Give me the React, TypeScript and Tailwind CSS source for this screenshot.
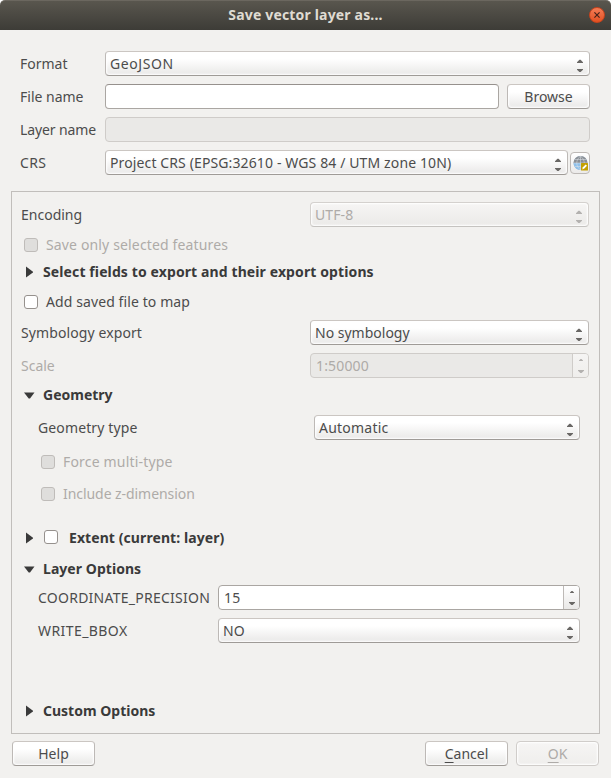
import type { ReactNode } from 'react';
import clsx from 'clsx';

function Arrows({ className }: { className?: string }) {
  return (
    <svg viewBox="0 0 6 13" className={clsx('h-[13px] w-[6px] shrink-0', className)} fill="currentColor">
      <path d="M0 4v-.8L2.4.8h1.2L6 3.2V4zM0 10v.8l2.4 2.2h1.2L6 10.8V10z" />
    </svg>
  );
}

function Select({ value, disabled, className }: { value: string; disabled?: boolean; className?: string }) {
  return (
    <div
      className={clsx(
        'flex h-[25px] items-center justify-between rounded-[4px] border pr-[6px] pl-1 shadow-[inset_0_0_2px_1px_#fff]',
        disabled
          ? 'border-[#d4d1ce] border-b-[#c5c3c0] bg-linear-to-b from-[#f6f5f4] to-[#ebeae8] text-[#aeaba8]'
          : 'border-[#bdb9b6] border-t-[#cbc6c2] border-b-[#9f9b97] bg-linear-to-b from-white from-30% to-[#e9e8e7] text-[#4c4c4c]',
        className,
      )}
    >
      <span>{value}</span>
      <Arrows className={clsx('mt-1', disabled ? 'text-[#b3b1af]' : 'text-[#696765]')} />
    </div>
  );
}

function SpinBox({ value, disabled, className }: { value: string; disabled?: boolean; className?: string }) {
  return (
    <div
      className={clsx(
        'flex h-[25px] items-stretch overflow-hidden rounded-[4px] border',
        disabled ? 'border-[#cfccc9] bg-[#eae9e7] text-[#aeaba8]' : 'border-[#aaa6a2] bg-white text-[#4c4c4c]',
        className,
      )}
    >
      <span className="flex flex-1 items-center pl-[5px]">{value}</span>
      <span
        className={clsx(
          'flex w-[16px] justify-center border-l bg-linear-to-b',
          disabled ? 'border-[#cfccc9] from-[#f5f4f3] to-[#efeeec]' : 'border-[#bdb9b6] from-white to-[#e9e8e7]',
        )}
      >
        <svg
          viewBox="0 0 6 15"
          className={clsx('mt-[5px] h-[15px] w-[6px]', disabled ? 'text-[#b3b1af]' : 'text-[#696765]')}
          fill="currentColor"
        >
          <path d="M1 2v-.5L2.5 0h1L5 1.500V2zM0 11v.8L2.400 14h1.200L6 11.800V11z" />
        </svg>
      </span>
    </div>
  );
}

function Button({ children, disabled }: { children: ReactNode; disabled?: boolean }) {
  return (
    <button
      disabled={disabled}
      className={clsx(
        'h-[25px] w-[83px] shrink-0 rounded-[4px] border text-center shadow-[inset_0_0_2px_1px_#fff]',
        disabled
          ? 'border-[#d0cdca] bg-linear-to-b from-[#f6f5f4] to-[#efeeec] text-[#aeaba8]'
          : 'border-[#bdb9b6] border-t-[#cbc6c2] border-b-[#9f9b97] bg-linear-to-b from-white from-30% to-[#e9e8e7] text-[#4c4c4c]',
      )}
    >
      {children}
    </button>
  );
}

function CheckBox({ disabled }: { disabled?: boolean }) {
  return (
    <span
      className={clsx(
        'size-[14px] shrink-0 rounded-[3px] border',
        disabled ? 'border-[#bfbcb9] bg-[#dfdedc]' : 'border-[#96918d] bg-white',
      )}
    />
  );
}

function Triangle({ open }: { open?: boolean }) {
  return (
    <svg viewBox="0 0 11 12" className="h-[12px] w-[11px] shrink-0" fill="#3a3a3a">
      {open ? <path d="M0 3.500h10.500L6 9.500H4.700z" /> : <path d="M2 .5 9 5.800v.8L2 11.500z" />}
    </svg>
  );
}

function Section({ title, open, check, className }: { title: ReactNode; open?: boolean; check?: boolean; className?: string }) {
  return (
    <div className={clsx('flex h-5 items-center pl-[12px] font-bold text-[#3a3a3a]', className)}>
      <Triangle open={open} />
      {check && (
        <span className="mr-[11px] -mt-[2px] ml-[9px] flex">
          <CheckBox />
        </span>
      )}
      <span className={check ? '' : 'ml-2'}>{title}</span>
    </div>
  );
}

function GlobeIcon() {
  return (
    <svg viewBox="0 0 16 16" className="size-4">
      <circle cx="8.5" cy="8" r="7" fill="#9fb9d0" />
      <path d="M1.500 8a7 7 0 0 1 14 0z" fill="#8a8f95" />
      <path d="M1.500 8h8v6.900A7 7 0 0 1 1.500 8z" fill="#8fc0ea" />
      <path
        d="M8.500 1v14M1.500 8h14M2.600 4.500h12M2.600 11.500h12M8.500 1c-5 4-5 10 0 14M8.500 1c5 4 5 10 0 14"
        fill="none"
        stroke="#dfe5ea"
        strokeWidth=".5"
      />
      <rect x="9" y="8" width="7" height="7.500" rx=".5" fill="#c4a000" />
      <path d="m10.200 14.400.7-2.200 2.800-2.700 1.300 1.300-2.700 2.800z" fill="#fff" />
    </svg>
  );
}

export default function App() {
  return (
    <div className="flex h-[778px] w-[611px] flex-col bg-white font-['Noto_Sans','Open_Sans',sans-serif] text-[14px] leading-5 text-[#4c4c4c]">
      <header className="flex h-[30px] shrink-0 items-center rounded-t-[5px] border-t border-[#6b675f] bg-linear-to-b from-[#59564e] to-[#3d3c37] pr-[6px] pl-[22px]">
        <h1 className="-mt-px flex-1 text-center font-bold tracking-[0.17px] text-[#dfdbd2]">Save vector layer as...</h1>
        <span className="-mt-px flex size-4 items-center justify-center rounded-full border border-[#c9431c] bg-linear-to-b from-[#f37c55] to-[#e2501f]">
          <svg viewBox="0 0 6 6" className="size-[6px]" stroke="#45231a" strokeWidth="1.2">
            <path d="m.4.4 5.2 5.2M5.6.4.4 5.6" />
          </svg>
        </span>
      </header>

      <main className="flex flex-1 flex-col bg-[#f2f1ef]">
        <div className="mt-[21px] flex flex-col gap-2 pr-[21px] pl-5">
          <div className="flex items-center">
            <label className="w-[85px]">Format</label>
            <Select value="GeoJSON" className="flex-1 tracking-[0.57px]" />
          </div>
          <div className="flex items-center">
            <label className="w-[85px]">File name</label>
            <div className="mr-2 h-[25px] flex-1 rounded-[4px] border border-[#aaa6a2] border-t-[#96918d] bg-white" />
            <Button>Browse</Button>
          </div>
          <div className="flex items-center">
            <label className="w-[85px] tracking-[-0.1px] whitespace-nowrap">Layer name</label>
            <div className="h-[25px] flex-1 rounded-[4px] border border-[#cfccc9] bg-[#eae9e7]" />
          </div>
          <div className="flex items-center">
            <label className="w-[85px] tracking-[0.4px]">CRS</label>
            <Select value="Project CRS (EPSG:32610 - WGS 84 / UTM zone 10N)" className="flex-1 tracking-[0.12px]" />
            <button className="ml-[2px] flex h-[22px] w-5 items-center justify-center rounded-[4px] border border-[#bdb9b6] bg-linear-to-b from-white to-[#ebeae9]">
              <GlobeIcon />
            </button>
          </div>
        </div>

        <section className="mx-[11px] mt-4 h-[543px] border border-[#c1bebb]">
          <div className="mt-[10px] flex items-center pr-[10px] pl-[9px]">
            <label className="w-[289px]">Encoding</label>
            <Select value="UTF-8" disabled className="flex-1 tracking-[0.1px]" />
          </div>
          <div className="mt-2 flex h-5 items-center gap-2 pl-[12px] text-[#aeaba8]">
            <CheckBox disabled />
            <span className="tracking-[0.15px]">Save only selected features</span>
          </div>
          <Section title="Select fields to export and their export options" className="mt-[7px] tracking-[0.11px]" />
          <div className="mt-[10px] flex h-5 items-center gap-2 pl-[12px]">
            <CheckBox />
            <span className="tracking-[0.1px]">Add saved file to map</span>
          </div>
          <div className="mt-2 flex items-center pr-[10px] pl-[9px]">
            <label className="w-[289px] tracking-[0.1px]">Symbology export</label>
            <Select value="No symbology" className="flex-1" />
          </div>
          <div className="mt-2 flex items-center pr-[10px] pl-[9px] text-[#aeaba8]">
            <label className="w-[289px]">Scale</label>
            <SpinBox value="1:50000" disabled className="flex-1 tracking-[0.15px]" />
          </div>

          <Section title="Geometry" open className="mt-[7px]" />
          <div className="mt-[10px] flex items-center pr-[19px] pl-[26px]">
            <label className="w-[276px] tracking-[0.12px]">Geometry type</label>
            <Select value="Automatic" className="flex-1 tracking-[0.22px]" />
          </div>
          <div className="mt-3 flex h-5 items-center gap-2 pl-[29px] text-[#aeaba8]">
            <CheckBox disabled />
            <span className="tracking-[0.18px]">Force multi-type</span>
          </div>
          <div className="mt-3 flex h-5 items-center gap-2 pl-[29px] text-[#aeaba8]">
            <CheckBox disabled />
            <span className="tracking-[-0.06px]">Include z-dimension</span>
          </div>

          <Section title="Extent (current: layer)" check className="mt-6 tracking-[0.08px]" />

          <Section title="Layer Options" open className="mt-[11px] tracking-[0.05px]" />
          <div className="mt-[6px] flex items-center pr-[19px] pl-[26px]">
            <label className="w-[180px] tracking-[0.25px]">COORDINATE_PRECISION</label>
            <SpinBox value="15" className="flex-1 tracking-[0.3px]" />
          </div>
          <div className="mt-2 flex items-center pr-[19px] pl-[26px]">
            <label className="w-[180px] tracking-[0.42px]">WRITE_BBOX</label>
            <Select value="NO" className="flex-1" />
          </div>

          <Section title="Custom Options" className="mt-[58px]" />
        </section>

        <footer className="mt-[7px] flex gap-2 px-[12px]">
          <Button>Help</Button>
          <span className="flex-1" />
          <Button>
            <span className="underline decoration-1 underline-offset-[3px]">C</span>ancel
          </Button>
          <Button disabled>
            <span className="underline decoration-1 underline-offset-[3px]">O</span>K
          </Button>
        </footer>
      </main>
    </div>
  );
}
